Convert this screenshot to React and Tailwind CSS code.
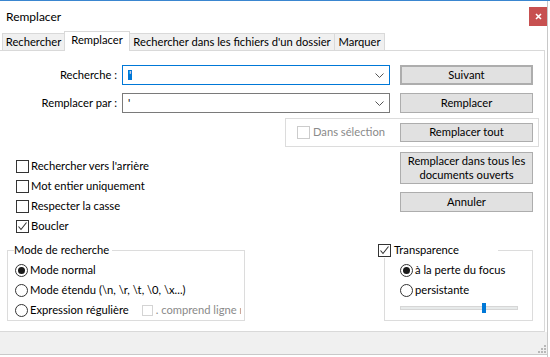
import React from "react";

const Check = ({ checked, disabled }) => (
  <span
    className={
      "w-[13px] h-[13px] shrink-0 border bg-white flex items-center justify-center " +
      (disabled ? "border-[#cccccc]" : "border-[#333333]")
    }
  >
    {checked && (
      <svg width="11" height="11" viewBox="0 0 11 11">
        <polyline points="1.5,5.5 4,8.5 9.5,1.5" fill="none" stroke="#333" strokeWidth="1.1" />
      </svg>
    )}
  </span>
);

const Radio = ({ checked }) => (
  <span className="w-[13px] h-[13px] shrink-0 rounded-full border border-[#333333] bg-white flex items-center justify-center">
    {checked && <span className="w-[7px] h-[7px] rounded-full bg-[#1a1a1a]" />}
  </span>
);

const Combo = ({ focused, children }) => (
  <div
    className={
      "w-[268px] h-[20px] ml-[4px] bg-white border flex items-center pl-[5px] " +
      (focused ? "border-[#0078d7]" : "border-[#7a7a7a]")
    }
  >
    <div className="flex-1 flex items-center">{children}</div>
    <svg width="9" height="5" viewBox="0 0 9 5" className="mr-[5px]">
      <polyline points="0.5,0.5 4.5,4.5 8.5,0.5" fill="none" stroke="#555" strokeWidth="1" />
    </svg>
  </div>
);

const Btn = ({ children, className = "" }) => (
  <div
    className={
      "w-[133px] bg-[#e1e1e1] border border-[#adadad] flex items-center justify-center text-center " +
      className
    }
  >
    {children}
  </div>
);

export default function App() {
  return (
    <div className="w-[550px] h-[357px] overflow-hidden bg-white text-black text-[11.2px] font-['Lato',sans-serif] border-t border-[#3a86d0]">
      <div className="w-[548px] h-[356px] border-r border-[#c8c8c8] flex flex-col">
        {/* title bar */}
        <div className="h-[30px] flex items-start pl-[6px] pr-0">
          <span className="mt-[7px] text-[12px]">Remplacer</span>
          <div className="ml-auto mt-[6px] w-[18px] h-[19px] bg-[#c75050] flex items-center justify-center">
            <svg width="7" height="7" viewBox="0 0 7 7">
              <path d="M1 1 L6 6 M6 1 L1 6" stroke="#fff" strokeWidth="1.6" />
            </svg>
          </div>
        </div>

        {/* tabs */}
        <div className="h-[19px] flex items-end pl-[2px]">
          <div className="w-[63px] h-[17px] border border-b-0 border-[#d9d9d9] bg-[#f0f0f0] flex items-center justify-center">
            Rechercher
          </div>
          <div className="w-[66px] h-[20px] -ml-[1px] -mb-[1px] relative z-10 border border-b-0 border-[#d9d9d9] bg-white flex items-start justify-center leading-[16px]">
            Remplacer
          </div>
          <div className="w-[206px] h-[17px] -ml-[1px] border border-b-0 border-[#d9d9d9] bg-[#f0f0f0] flex items-center justify-center">
            Rechercher dans les fichiers d'un dossier
          </div>
          <div className="w-[51px] h-[17px] -ml-[1px] border border-b-0 border-[#d9d9d9] bg-[#f0f0f0] flex items-center justify-center">
            Marquer
          </div>
        </div>

        {/* panel */}
        <div className="w-[545px] h-[282px] border-t border-r border-b border-[#d9d9d9] bg-white flex flex-col">
          <div className="flex items-center mt-[14px] h-[20px]">
            <div className="w-[118px] text-right pr-[1px]">Recherche :</div>
            <Combo focused>
              <span className="bg-[#0078d7] text-white leading-[10px] px-[1px]">'</span>
            </Combo>
            <Btn className="ml-[10px] h-[20px] border-2 border-[#0078d7]">Suivant</Btn>
          </div>

          <div className="flex items-center mt-[8px] h-[20px]">
            <div className="w-[118px] text-right pr-[1px]">Remplacer par :</div>
            <Combo>
              <span>'</span>
            </Combo>
            <Btn className="ml-[10px] h-[20px]">Remplacer</Btn>
          </div>

          <div className="mt-[5px] ml-[285px] w-[254px] h-[29px] border border-[#dcdcdc] flex items-center pl-[11px] pr-[5px]">
            <Check disabled />
            <span className="ml-[3px] text-[#8a8a8a]">Dans sélection</span>
            <Btn className="ml-auto h-[19px]">Remplacer tout</Btn>
          </div>

          <div className="mt-[5px] flex">
            <div className="ml-[16px] w-[384px] pt-[4px] flex flex-col">
              {[
                ["Rechercher vers l'arrière", false],
                ["Mot entier uniquement", false],
                ["Respecter la casse", false],
                ["Boucler", true],
              ].map(([t, c]) => (
                <div key={t} className="h-[20px] flex items-center">
                  <Check checked={c} />
                  <span className="ml-[2px]">{t}</span>
                </div>
              ))}
            </div>
            <div className="flex flex-col">
              <Btn className="h-[32px] leading-[14px]">
                Remplacer dans tous les
                <br />
                documents ouverts
              </Btn>
              <Btn className="mt-[8px] h-[20px]">Annuler</Btn>
            </div>
          </div>

          <div className="mt-[6px] flex items-start">
            <fieldset className="ml-[7px] w-[238px] h-[79px] border border-[#dcdcdc] pl-[6px]">
              <legend className="leading-[16px] pr-[3px]">Mode de recherche</legend>
              <div className="mt-[2px] ml-[1px] flex flex-col">
                <div className="h-[20px] flex items-center">
                  <Radio checked />
                  <span className="ml-[2px]">Mode normal</span>
                </div>
                <div className="h-[20px] flex items-center">
                  <Radio />
                  <span className="ml-[2px]">Mode étendu (\n, \r, \t, \0, \x...)</span>
                </div>
                <div className="h-[20px] w-[226px] overflow-hidden whitespace-nowrap flex items-center">
                  <Radio />
                  <span className="ml-[2px]">Expression régulière</span>
                  <span className="ml-[13px] w-[11px] h-[11px] shrink-0 border border-[#d4d4d4] bg-white" />
                  <span className="ml-[3px] text-[#8a8a8a]">. comprend ligne nouvelle</span>
                </div>
              </div>
            </fieldset>

            <fieldset className="ml-[139px] w-[149px] h-[79px] border border-[#dcdcdc] pl-0">
              <legend className="-ml-[7px] w-[120px] leading-[16px] flex items-center bg-white">
                <Check checked />
                <span className="ml-[3px]">Transparence</span>
              </legend>
              <div className="mt-[2px] ml-[15px] flex flex-col">
                <div className="h-[20px] flex items-center">
                  <Radio checked />
                  <span className="ml-[2px]">à la perte du focus</span>
                </div>
                <div className="h-[20px] flex items-center">
                  <Radio />
                  <span className="ml-[2px]">persistante</span>
                </div>
                <div className="h-[16px] flex items-center">
                  <div className="relative w-[118px] h-[4px] bg-[#e7eaea] border border-[#d6d6d6]">
                    <div className="absolute left-[81px] -top-[4px] w-[4px] h-[10px] bg-[#0078d7]" />
                  </div>
                </div>
              </div>
            </fieldset>
          </div>
        </div>

        {/* status bar */}
        <div className="h-[23px] bg-[#f0f0f0] border-b border-[#c9c9c9] flex items-end justify-end pr-[1px] pb-[1px]">
          <svg width="8" height="8" viewBox="0 0 8 8">
            <rect x="6" y="0" width="2" height="2" fill="#b8b8b8" />
            <rect x="3" y="3" width="2" height="2" fill="#b8b8b8" />
            <rect x="6" y="3" width="2" height="2" fill="#b8b8b8" />
            <rect x="0" y="6" width="2" height="2" fill="#b8b8b8" />
            <rect x="3" y="6" width="2" height="2" fill="#b8b8b8" />
            <rect x="6" y="6" width="2" height="2" fill="#b8b8b8" />
          </svg>
        </div>
      </div>
    </div>
  );
}
